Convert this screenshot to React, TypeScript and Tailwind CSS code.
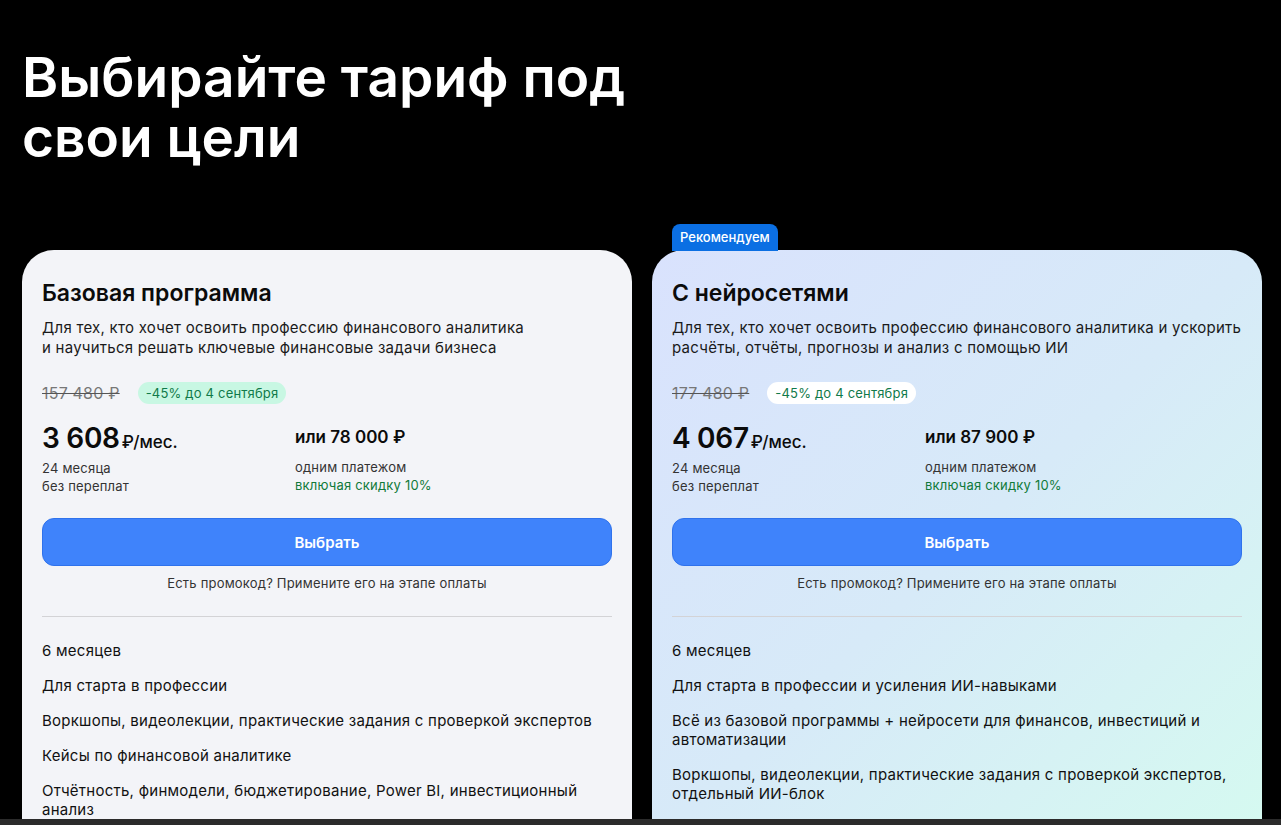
import React from "react";

type Plan = {
  title: string;
  desc: string[];
  oldPrice: string;
  monthly: string;
  full: string;
  features: string[];
  featured?: boolean;
};

const PLANS: Plan[] = [
  {
    title: "Базовая программа",
    desc: [
      "Для тех, кто хочет освоить профессию финансового аналитика",
      "и научиться решать ключевые финансовые задачи бизнеса",
    ],
    oldPrice: "157 480 ₽",
    monthly: "3 608",
    full: "78 000",
    features: [
      "6 месяцев",
      "Для старта в профессии",
      "Воркшопы, видеолекции, практические задания с проверкой экспертов",
      "Кейсы по финансовой аналитике",
      "Отчётность, финмодели, бюджетирование, Power BI, инвестиционный анализ",
    ],
  },
  {
    title: "С нейросетями",
    desc: [
      "Для тех, кто хочет освоить профессию финансового аналитика и ускорить расчёты, отчёты, прогнозы и анализ с помощью ИИ",
    ],
    oldPrice: "177 480 ₽",
    monthly: "4 067",
    full: "87 900",
    featured: true,
    features: [
      "6 месяцев",
      "Для старта в профессии и усиления ИИ-навыками",
      "Всё из базовой программы + нейросети для финансов, инвестиций и автоматизации",
      "Воркшопы, видеолекции, практические задания с проверкой экспертов, отдельный ИИ-блок",
    ],
  },
];

function PlanCard({ plan }: { plan: Plan }) {
  return (
    <div className="relative flex-1 pt-[26px]">
      {plan.featured && (
        <div className="absolute left-[20px] top-0 flex h-[27px] items-center rounded-t-[8px] bg-[#0b6fe3] px-[8px] text-[13px] font-medium text-white">
          Рекомендуем
        </div>
      )}
      <div
        className={
          "h-[600px] rounded-[32px] px-[20px] pt-[29px] " +
          (plan.featured
            ? "bg-gradient-to-br from-[#d9e2fd] via-[#d7eaf8] to-[#d5faf0]"
            : "bg-[#f3f4f8]")
        }
      >
        <h3 className="text-[23px] font-semibold leading-[28px] text-[#0b0b0b]">{plan.title}</h3>
        <p className="mt-[11px] text-[15px] leading-[20px] tracking-[0.25px] text-[#1a1a1a]">
          {plan.desc.map((line, i) => (
            <span key={i} className="block">
              {line}
            </span>
          ))}
        </p>

        <div className="mt-[24px] flex items-center gap-[18px]">
          <span className="text-[16px] leading-[20px] tracking-[0.2px] text-[#777] line-through decoration-[#555]">{plan.oldPrice}</span>
          <span
            className={
              "rounded-full px-[8px] py-[2px] text-[13px] leading-[18px] tracking-[0.2px] text-[#107a4a] " +
              (plan.featured ? "bg-white" : "bg-[#c8f7e3]")
            }
          >
            -45% до 4 сентября
          </span>
        </div>

        <div className="mt-[17px] flex">
          <div className="w-[253px]">
            <div className="flex items-baseline">
              <span className="text-[28px] font-semibold leading-[34px] tracking-[-0.3px] text-[#0b0b0b]">{plan.monthly}</span>
              <span className="ml-[2px] text-[17px] font-medium text-[#0b0b0b]">₽/мес.</span>
            </div>
            <div className="mt-[3px] text-[13px] leading-[18px] tracking-[0.2px] text-[#333]">
              24 месяца
              <br />
              без переплат
            </div>
          </div>
          <div>
            <div className="flex h-[34px] items-center">
              <span className="text-[17px] font-semibold text-[#0b0b0b]">или {plan.full} ₽</span>
            </div>
            <div className="mt-[3px] text-[13px] leading-[18px] tracking-[0.2px] text-[#333]">
              одним платежом
              <br />
              <span className="text-[#107a3a]">включая скидку 10%</span>
            </div>
          </div>
        </div>

        <button className="mt-[23px] flex h-[48px] w-full items-center justify-center rounded-[12px] border border-[#2f72ec] bg-[#3f83fb] pt-[3px] text-[15px] font-semibold text-white">
          Выбрать
        </button>
        <p className="mt-[8px] text-center text-[13px] leading-[18px] tracking-[0.2px] text-[#333]">
          Есть промокод? Примените его на этапе оплаты
        </p>

        <div className="mt-[24px] h-px bg-[#d3d3d6]" />

        <ul className="mt-[24px] flex flex-col gap-[16px]">
          {plan.features.map((f) => (
            <li key={f} className="text-[15px] leading-[19px] tracking-[0.25px] text-[#111]">
              {f}
            </li>
          ))}
        </ul>
      </div>
    </div>
  );
}

export default function App() {
  return (
    <div className="flex h-[825px] w-full flex-col overflow-hidden bg-black" style={{ fontFamily: "Inter, 'Noto Sans', sans-serif" }}>
      <div className="h-[819px] overflow-hidden pl-[22px] pr-[19px]">
        <h1 className="pt-[47px] text-[55px] font-semibold leading-[60px] text-white">
          Выбирайте тариф под
          <br />
          свои цели
        </h1>
        <div className="mt-[57px] flex gap-[20px]">
          {PLANS.map((p) => (
            <PlanCard key={p.title} plan={p} />
          ))}
        </div>
      </div>
      <div className="h-[6px] bg-[#2b2b2b]" />
    </div>
  );
}
